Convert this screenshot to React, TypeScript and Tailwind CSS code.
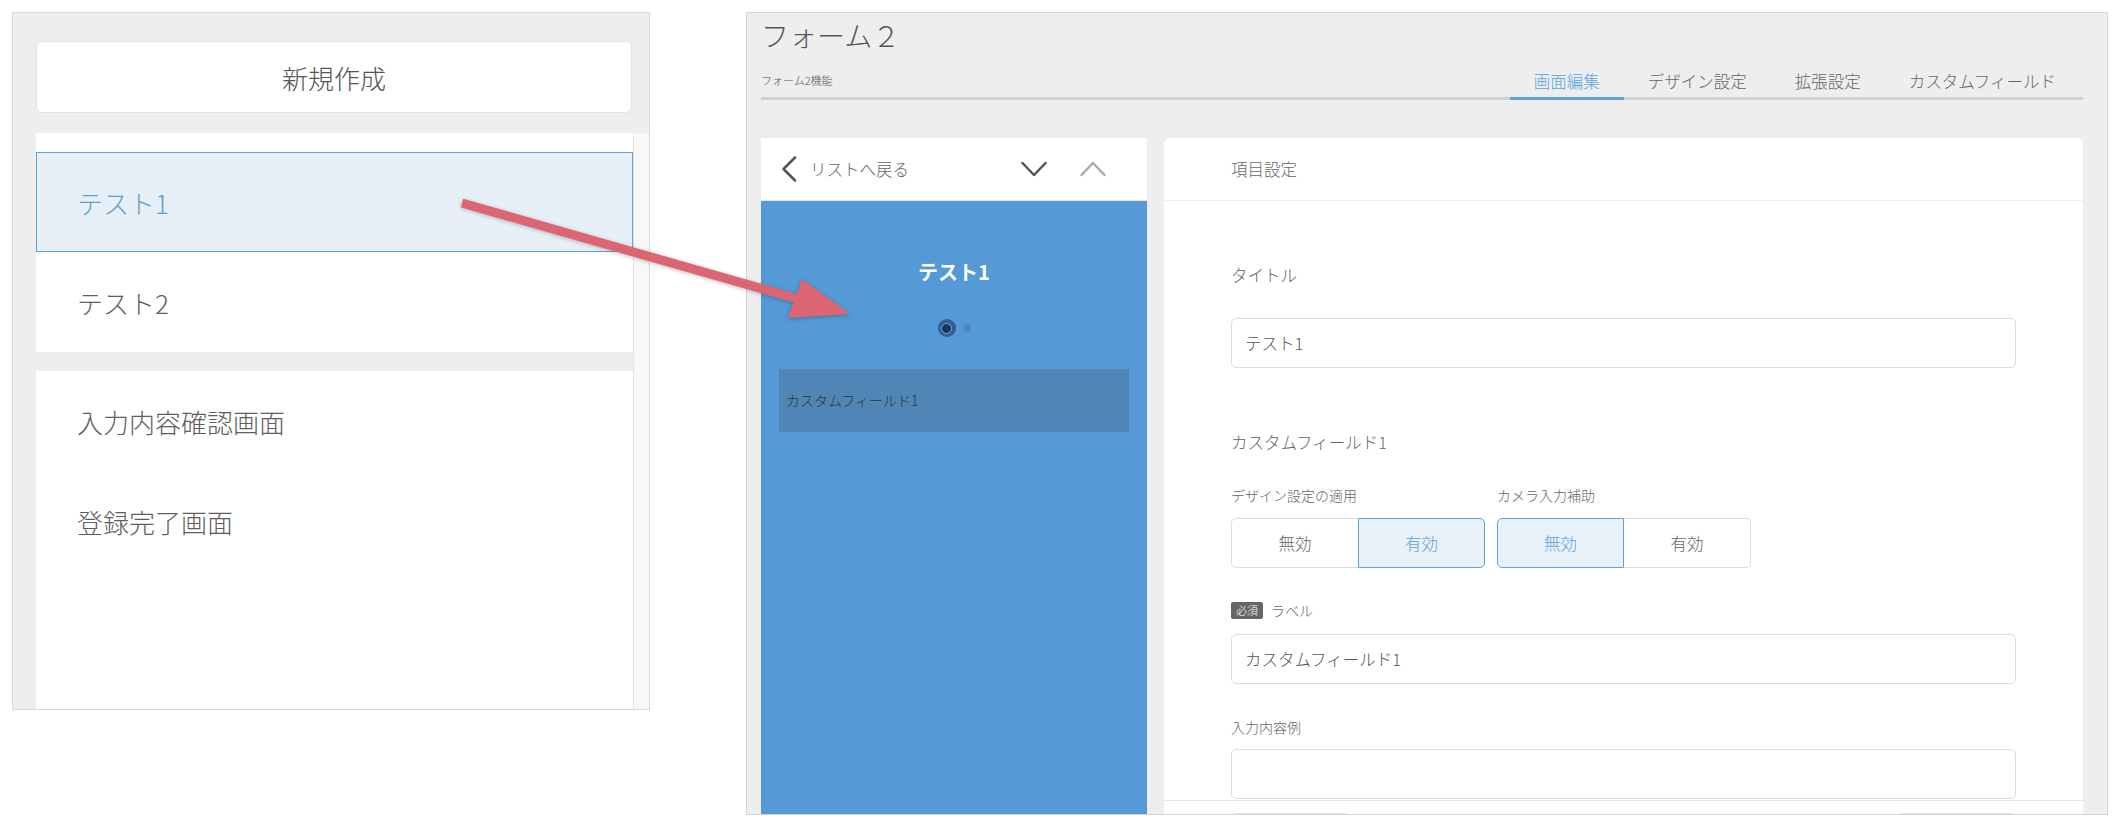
import React from 'react';

const ListRow = ({ label, selected = false }: { label: string; selected?: boolean }) => (
  <div
    className={
      selected
        ? 'flex h-[100px] items-center border-[1.5px] border-[#5aa5dd] bg-[#e7f0f6] pl-[40px] text-[26px] text-[#5a9fd4]'
        : 'flex h-[100px] items-center border-[1.5px] border-transparent pl-[40px] text-[26px] text-[#5e5e5e]'
    }
  >
    {label}
  </div>
);

const ScreenList = () => (
  <div className="flex h-[698px] w-[638px] flex-col border border-[#d9d9d9] bg-[#eeeeee]">
    <div className="shrink-0 pl-[23px] pr-[17px] pt-[28px] pb-[20px]">
      <button className="flex h-[72px] w-full items-center justify-center rounded-[6px] border border-[#e2e2e2] bg-white text-[26px] text-[#555]">
        新規作成
      </button>
    </div>
    <div className="flex min-h-0 flex-1 pl-[23px]">
      <div className="flex flex-1 flex-col">
        <div className="shrink-0 bg-white pt-[19px]">
          <ListRow label="テスト1" selected />
          <ListRow label="テスト2" />
        </div>
        <div className="h-[19px] shrink-0" />
        <div className="flex-1 bg-white">
          <ListRow label="入力内容確認画面" />
          <ListRow label="登録完了画面" />
        </div>
      </div>
      <div className="w-[16px] border-l border-[#e3e3e3] bg-[#f8f8f8]" />
    </div>
  </div>
);

const tabs = ['画面編集', 'デザイン設定', '拡張設定', 'カスタムフィールド'];

const Field = ({ value = '', className = '' }: { value?: string; className?: string }) => (
  <div
    className={`flex h-[50px] shrink-0 items-center rounded-[5px] border border-[#dcdcdc] pl-[13px] text-[16.5px] text-[#555] ${className}`}
  >
    {value}
  </div>
);

const Toggle = ({ active }: { active: 'left' | 'right' }) => (
  <div className="flex">
    <div
      className={
        active === 'left'
          ? 'flex h-[50px] w-[127px] items-center justify-center rounded-l-[5px] border border-[#5aa3dc] bg-[#e8f1f8] text-[16.5px] text-[#5aa3dc]'
          : 'flex h-[50px] w-[127px] items-center justify-center rounded-l-[5px] border-y border-l border-[#dddddd] text-[16.5px] text-[#666]'
      }
    >
      無効
    </div>
    <div
      className={
        active === 'right'
          ? 'flex h-[50px] w-[127px] items-center justify-center rounded-r-[5px] border border-[#5aa3dc] bg-[#e8f1f8] text-[16.5px] text-[#5aa3dc]'
          : 'flex h-[50px] w-[127px] items-center justify-center rounded-r-[5px] border-y border-r border-[#dddddd] text-[16.5px] text-[#666]'
      }
    >
      有効
    </div>
  </div>
);

const Preview = () => (
  <div className="flex w-[386px] shrink-0 flex-col">
    <div className="flex h-[63px] shrink-0 items-center border-b border-[#e6e6e6] bg-white pl-[20px] pr-[41px]">
      <svg width="16" height="26" viewBox="0 0 16 26" fill="none">
        <polyline points="14,1.5 2.5,13 14,24.5" stroke="#555" strokeWidth="2.5" strokeLinecap="round" strokeLinejoin="round" />
      </svg>
      <span className="ml-[13px] text-[16.5px] leading-[24px] text-[#666]">リストへ戻る</span>
      <svg className="ml-auto" width="26" height="16" viewBox="0 0 26 16" fill="none">
        <polyline points="1.5,2 13,14 24.5,2" stroke="#555" strokeWidth="2.5" strokeLinecap="round" strokeLinejoin="round" />
      </svg>
      <svg className="ml-[33px]" width="26" height="16" viewBox="0 0 26 16" fill="none">
        <polyline points="1.5,14 13,2 24.5,14" stroke="#aaaaaa" strokeWidth="2.5" strokeLinecap="round" strokeLinejoin="round" />
      </svg>
    </div>
    <div className="flex flex-1 flex-col items-center bg-[#559ad6] pt-[57px]">
      <p className="text-[20px] font-bold leading-[28px] text-white">テスト1</p>
      <div className="mt-[33px] flex items-center gap-[7px]">
        <div className="flex h-[18px] w-[18px] items-center justify-center rounded-full bg-[#30608d]">
          <div className="h-[11px] w-[11px] rounded-full border border-[#79acdc] bg-[#16365a]" />
        </div>
        <div className="h-[8px] w-[8px] rounded-full bg-[#4a86c3]" />
      </div>
      <div className="mt-[32px] flex h-[63px] w-[350px] items-center bg-[#4f86b5] pl-[7px] text-[14px] text-[#333]">
        カスタムフィールド1
      </div>
    </div>
  </div>
);

const Settings = () => (
  <div className="flex min-w-0 flex-1 flex-col rounded-t-[6px] bg-white">
    <div className="flex h-[63px] shrink-0 items-center border-b border-[#eeeeee] pl-[67px] text-[16.5px] text-[#666]">
      項目設定
    </div>
    <div className="shrink-0 px-[67px]">
      <p className="mt-[62px] text-[16.5px] leading-[24px] text-[#666]">タイトル</p>
      <Field value="テスト1" className="mt-[31px]" />
      <p className="mt-[62px] text-[16.5px] leading-[24px] text-[#666]">カスタムフィールド1</p>
      <div className="mt-[31px] flex gap-[12px]">
        <div>
          <p className="text-[14px] leading-[20px] text-[#666]">デザイン設定の適用</p>
          <div className="mt-[13px]">
            <Toggle active="right" />
          </div>
        </div>
        <div>
          <p className="text-[14px] leading-[20px] text-[#666]">カメラ入力補助</p>
          <div className="mt-[13px]">
            <Toggle active="left" />
          </div>
        </div>
      </div>
      <div className="mt-[32px] flex h-[20px] items-center">
        <span className="rounded-[2px] bg-[#666] px-[5px] text-[11px] leading-[17px] text-white">必須</span>
        <span className="ml-[8px] text-[14px] text-[#666]">ラベル</span>
      </div>
      <Field value="カスタムフィールド1" className="mt-[14px]" />
      <p className="mt-[33px] text-[14px] leading-[20px] text-[#666]">入力内容例</p>
      <Field className="mt-[12px]" />
    </div>
    <div className="mt-[1px] flex shrink-0 justify-between border-t border-[#e6e6e6] px-[68px] pt-[12px]">
      <div className="h-[40px] w-[116px] rounded-t-[4px] bg-[#e4e4e4]" />
      <div className="h-[40px] w-[116px] rounded-t-[4px] bg-[#e4e4e4]" />
    </div>
  </div>
);

const FormEditor = () => (
  <div className="flex h-[803px] w-[1362px] flex-col overflow-hidden border border-[#d4d4d4] bg-[#eeeeee] pl-[14px] pr-[24px]">
    <h1 className="shrink-0 pt-[4px] text-[28px] leading-[36px] text-[#555]">フォーム２</h1>
    <div className="flex h-[47px] shrink-0 items-end justify-between border-b-[3px] border-[#d0d0d0]">
      <span className="pb-[9px] text-[11px] leading-[16px] text-[#555]">フォーム2機能</span>
      <div className="flex items-end pr-[3px]">
        {tabs.map((t, i) =>
          i === 0 ? (
            <div key={t} className="-mb-[3px] border-b-[3px] border-[#5aa3dc] px-[24px] pb-[4px] text-[16.5px] leading-[24px] text-[#5aa3dc]">
              {t}
            </div>
          ) : (
            <div key={t} className="px-[24px] pb-[4px] text-[16.5px] leading-[24px] text-[#666]">
              {t}
            </div>
          )
        )}
      </div>
    </div>
    <div className="mt-[38px] flex min-h-0 flex-1 gap-[17px]">
      <Preview />
      <Settings />
    </div>
  </div>
);

const Arrow = () => (
  <svg
    className="pointer-events-none absolute left-0 top-0 drop-shadow-[0_1px_2px_rgba(0,0,0,0.25)]"
    width="2124"
    height="830"
    viewBox="0 0 2124 830"
  >
    <line x1="462" y1="203" x2="798" y2="299" stroke="#dc6571" strokeWidth="9" />
    <polygon points="802,279 788,318 850,314" fill="#dc6571" />
  </svg>
);

export default function App() {
  return (
    <div className="relative h-[830px] w-[2124px] overflow-hidden bg-white font-['Noto_Sans_CJK_JP','Noto_Sans',sans-serif] font-light text-[#666]">
      <div className="flex items-start gap-[96px] pl-[12px] pt-[12px]">
        <ScreenList />
        <FormEditor />
      </div>
      <Arrow />
    </div>
  );
}
